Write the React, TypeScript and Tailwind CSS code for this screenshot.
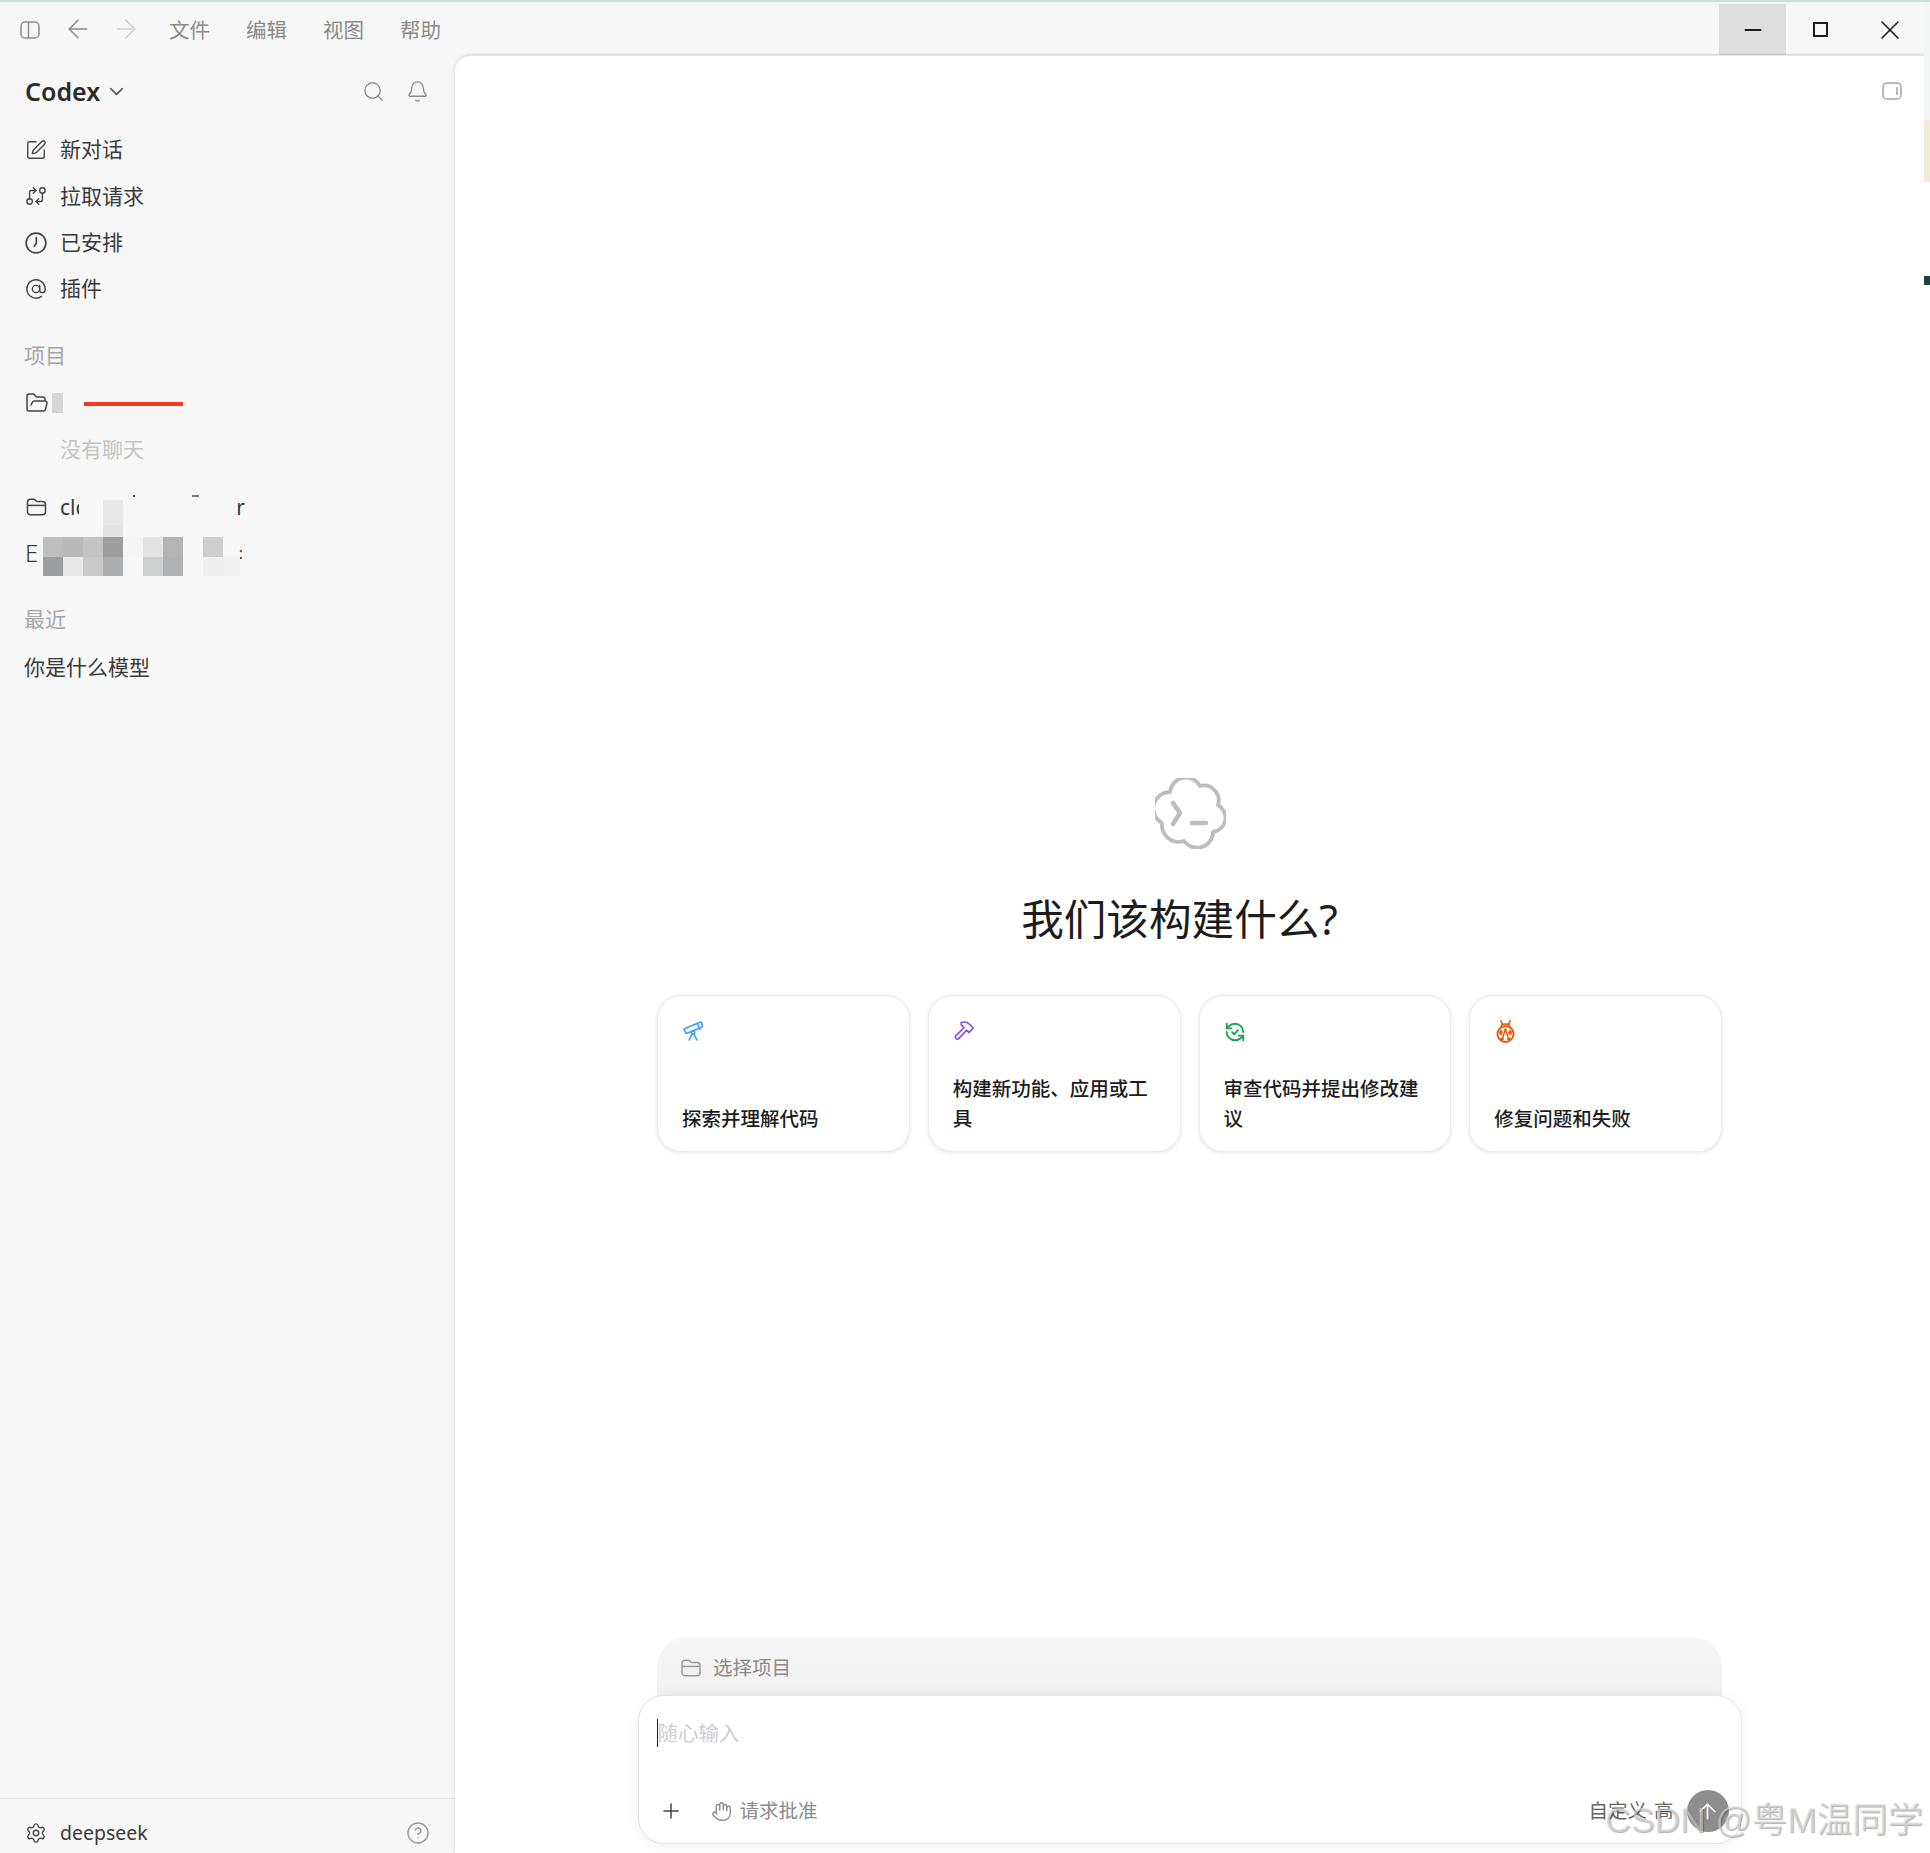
import React from "react";
import { SquarePen, GitCompareArrows, AtSign, FolderOpen, Search, Bell, Settings, CircleHelp, Hand, Plus, ArrowUp, ArrowLeft, ArrowRight, ChevronDown, Minus, X } from "lucide-react";

const FolderIcon = ({ className }: { className?: string }) => (
  <svg viewBox="0 0 20 18" fill="none" stroke="currentColor" strokeWidth="1.5" strokeLinejoin="round" className={className}>
    <path d="M1 4.2C1 2.4 2.2 1.2 4 1.2h3c1 0 1.5.4 2.1 1.1l.6.7c.3.3.6.5 1.1.5H16c1.8 0 3 1.2 3 3v7.2c0 1.8-1.2 3-3 3H4c-1.8 0-3-1.2-3-3z" />
    <path d="M1 7.4h18" />
  </svg>
);

const ClockIcon = ({ className }: { className?: string }) => (
  <svg viewBox="0 0 20 20" fill="none" stroke="currentColor" strokeWidth="1.5" strokeLinecap="round" strokeLinejoin="round" className={className}>
    <circle cx="10" cy="10" r="9" />
    <path d="M10.3 5v5.2L8.4 13" />
  </svg>
);

const TelescopeIcon = ({ className }: { className?: string }) => (
  <svg viewBox="0 0 20 20" fill="none" stroke="currentColor" strokeWidth="1.6" strokeLinecap="round" strokeLinejoin="round" className={className}>
    <path d="M1.5 7.8 14.5 2.2l2.8-1c.7-.2 1.1 0 1.3.5l.9 3.2c.2.6 0 1-.5 1.2l-2.8 1.2L4 12.2c-.6.2-1 0-1.2-.4L1.2 8.8c-.2-.4 0-.8.3-1z" />
    <path d="M14.2 2.4l2.6 5.8" />
    <circle cx="10" cy="11.4" r="1.7" />
    <path d="M9.1 13 6.2 19M11 13l2.9 6" />
  </svg>
);

const HammerIcon = ({ className }: { className?: string }) => (
  <svg viewBox="0 0 20 20" fill="none" stroke="currentColor" strokeWidth="1.6" strokeLinecap="round" strokeLinejoin="round" className={className}>
    <path d="M7.2 1.6c3-1 6.2-.4 8 1.4l4 4-4.2 4.6-2.4-2.4-7.7 8.2c-.8.9-2 1-2.9.1-.9-.8-.9-2 0-2.9l8-7.8-2.8-3.2z" />
  </svg>
);

const ReviewIcon = ({ className }: { className?: string }) => (
  <svg viewBox="0 0 24 24" fill="none" stroke="currentColor" strokeWidth="2" strokeLinecap="round" strokeLinejoin="round" className={className}>
    <path d="M21 12a9 9 0 0 0-9-9 9.75 9.75 0 0 0-6.74 2.74L3 8" />
    <path d="M3 3v5h5" />
    <path d="M3 12a9 9 0 0 0 9 9 9.75 9.75 0 0 0 6.74-2.74L21 16" />
    <path d="M16 16h5v5" />
    <path d="M8.8 12.2l2.3 2.3 4-4.5" />
  </svg>
);

const BugIcon = ({ className }: { className?: string }) => (
  <svg viewBox="0 0 18 22" fill="none" className={className}>
    <path d="M4.5.8 6 3.8M13.5.8 12 3.8" stroke="currentColor" strokeWidth="1.5" strokeLinecap="round" />
    <path d="M5 7V5.8C5 3.2 13 3.2 13 5.8V7" stroke="currentColor" strokeWidth="1.6" />
    <circle cx="9" cy="13.4" r="7.7" stroke="currentColor" strokeWidth="1.8" />
    <path d="M9 8 6.6 16.5M9 8l2.4 8.5" stroke="currentColor" strokeWidth="1.4" />
    <ellipse cx="4.6" cy="12" rx="1.7" ry="2.4" fill="currentColor" />
    <ellipse cx="13.4" cy="12" rx="1.7" ry="2.4" fill="currentColor" />
    <ellipse cx="5.8" cy="18" rx="1.8" ry="1.4" fill="currentColor" />
    <ellipse cx="12.2" cy="18" rx="1.8" ry="1.4" fill="currentColor" />
  </svg>
);

const navItems = [
  { Icon: SquarePen, label: "新对话" },
  { Icon: GitCompareArrows, label: "拉取请求", flip: true },
  { Icon: ClockIcon, label: "已安排" },
  { Icon: AtSign, label: "插件" },
];

const cards = [
  { Icon: TelescopeIcon, cls: "ml-px h-[20px] w-[20px] text-[#3b9cff]", text: "探索并理解代码" },
  { Icon: HammerIcon, cls: "ml-px h-[20px] w-[20px] text-[#8b47f5]", text: "构建新功能、应用或工具" },
  { Icon: ReviewIcon, cls: "h-[22px] w-[22px] text-[#16a34a]", text: "审查代码并提出修改建议" },
  { Icon: BugIcon, cls: "-mt-px ml-[2px] h-[23px] w-[19px] text-[#ea580c]", text: "修复问题和失败" },
];

const mosaic = [
  "", "", "", "bg-[#e8e8e8]", "", "", "", "", "", "",
  "", "", "", "bg-[#e3e3e3]", "", "", "", "", "", "",
  "bg-[#bebebe]", "bg-[#b9b9ba]", "bg-[#c4c4c4]", "bg-[#9e9e9f]", "bg-[#f5f5f5]", "bg-[#e3e3e3]", "bg-[#b4b4b5]", "", "bg-[#cdcecd]", "",
  "bg-[#9d9e9f]", "bg-[#e8e8e8]", "bg-[#c9c9c9]", "bg-[#acadae]", "", "bg-[#cfd0d0]", "bg-[#b0b1b2]", "", "bg-[#efefef]", "bg-[#f0f0f0]",
];

export default function App() {
  return (
    <div className="relative flex h-[1853px] w-[1930px] flex-col overflow-hidden bg-white font-['Noto_Sans','Noto_Sans_CJK_SC',sans-serif] text-[21px] text-[#3a3a3a]">
      <div className="h-[2px] bg-[#cddbdb]" />
      <div className="flex min-h-0 flex-1">
        <div className="flex w-[1924px] flex-col bg-[#f7f7f7]">
          {/* title bar */}
          <div className="flex h-[53px] items-center pl-[20px]">
            <svg viewBox="0 0 20 18" fill="none" stroke="#8f8f8f" strokeWidth="1.5" className="mt-[2px] h-[18px] w-[20px]">
              <rect x="1" y="1" width="18" height="16" rx="4" />
              <path d="M8.5 1v16" />
            </svg>
            <ArrowLeft className="ml-[23px] h-[30px] w-[30px] text-[#8a8a8a]" strokeWidth={1.2} />
            <ArrowRight className="ml-[18px] h-[30px] w-[30px] text-[#cfcfcf]" strokeWidth={1.2} />
            <div className="ml-[28px] mt-[3px] flex gap-[36px] text-[20.5px] leading-none text-[#8a8a8a]">
              <span>文件</span>
              <span>编辑</span>
              <span>视图</span>
              <span>帮助</span>
            </div>
            <div className="ml-auto flex h-full">
              <div className="mt-[2px] flex w-[67px] items-center justify-center bg-[#dedede]">
                <Minus className="h-[26px] w-[26px] text-[#1c1c1c]" strokeWidth={1.7} />
              </div>
              <div className="mt-[2px] flex w-[68px] items-center justify-center">
                <div className="h-[15px] w-[15px] border-2 border-[#1c1c1c]" />
              </div>
              <div className="mt-[2px] flex w-[70px] items-center justify-center pl-px">
                <X className="h-[32px] w-[32px] text-[#1c1c1c]" strokeWidth={1.2} />
              </div>
            </div>
          </div>

          <div className="flex min-h-0 flex-1">
            {/* sidebar */}
            <aside className="flex w-[455px] flex-col">
              <div className="flex h-[72px] items-center pl-[25px] pr-[26px]">
                <span className="text-[25px] font-semibold leading-none text-[#2b2b2b]">Codex</span>
                <ChevronDown className="ml-[5px] h-[23px] w-[23px] text-[#555]" strokeWidth={1.5} />
                <Search className="ml-auto h-[23px] w-[23px] text-[#8a8a8a]" strokeWidth={1.4} />
                <Bell className="ml-[21px] h-[23px] w-[23px] text-[#8a8a8a]" strokeWidth={1.4} />
              </div>
              <nav className="flex flex-col">
                {navItems.map(({ Icon, label, flip }) => (
                  <div key={label} className="flex h-[46.33px] items-center gap-[13px] pl-[25px]">
                    <Icon className={flip ? "h-[22px] w-[22px] -scale-x-100 text-[#444]" : "h-[22px] w-[22px] text-[#444]"} strokeWidth={1.5} />
                    <span>{label}</span>
                  </div>
                ))}
              </nav>
              <div className="relative mt-[20px] flex flex-col">
                <div className="flex h-[46px] items-center pl-[24px] text-[#a6a6a6]">项目</div>
                <div className="mt-[2px] flex h-[46px] items-center pl-[25px]">
                  <FolderOpen className="h-[24px] w-[24px] text-[#444]" strokeWidth={1.5} />
                  <div className="ml-[3px] h-[20px] w-[11px] bg-[#d6d6d6]" />
                  <div className="ml-[21px] mt-[2px] h-[4px] w-[99px] bg-[#ee3c22]" />
                </div>
                <div className="flex h-[46px] items-center pl-[60px] text-[#c4c4c4]">没有聊天</div>
                <div className="relative mt-[12px] flex h-[46px] w-[246px] items-center pl-[26px] pr-[1px]">
                  <FolderIcon className="h-[18px] w-[21px] text-[#444]" />
                  <span className="ml-[13px] block w-[19px] overflow-hidden whitespace-nowrap">clc</span>
                  <span className="ml-auto">r</span>
                  <div className="absolute left-[133px] top-[11px] h-[2px] w-[2px] bg-[#555]" />
                  <div className="absolute left-[192px] top-[11px] h-[2px] w-[7px] bg-[#777]" />
                </div>
                <div className="flex h-[46px] w-[244px] items-center justify-between pl-[25px] pr-[1px]">
                  <span className="text-[24px] font-light leading-none">E</span>
                  <span className="text-[16px]">:</span>
                </div>
                <div className="absolute left-[43px] top-[168px] grid grid-cols-[repeat(9,20px)_17px] grid-rows-[25px_12px_20px_19px]">
                  {mosaic.map((c, i) => (
                    <div key={i} className={c} />
                  ))}
                </div>
                <div className="mt-[20px] flex h-[46px] items-center pl-[24px] text-[#a6a6a6]">最近</div>
                <div className="mt-[2px] flex h-[46px] items-center pl-[24px]">你是什么模型</div>
              </div>
              <div className="mt-auto flex h-[55px] items-center gap-[13px] border-t border-[#e3e3e3] pl-[25px] pr-[25px] pt-[14px]">
                <Settings className="h-[22px] w-[22px] text-[#444]" strokeWidth={1.5} />
                <span className="text-[19.5px]">deepseek</span>
                <CircleHelp className="ml-auto h-[24px] w-[24px] text-[#999]" strokeWidth={1.4} />
              </div>
            </aside>

            {/* main */}
            <main className="flex min-w-0 flex-1 flex-col items-center rounded-tl-[16px] border-t border-[#e6e6e6] bg-white pb-[9px] shadow-[-1px_0_4px_rgba(0,0,0,0.09),1px_0_2px_rgba(0,0,0,0.2)]">
              <div className="flex w-full justify-end pr-[22px] pt-[26px]">
                <svg viewBox="0 0 20 18" fill="none" stroke="#a3a3a3" strokeWidth="1.5" className="h-[18px] w-[20px]">
                  <rect x="1" y="1" width="18" height="16" rx="4" />
                  <path d="M15 5v8" />
                </svg>
              </div>
              <svg viewBox="0 0 71 71" fill="none" stroke="#bdbdbd" strokeWidth="3.8" strokeLinecap="round" strokeLinejoin="round" className="ml-[2px] mt-[678px] h-[71px] w-[71px]">
                <path d="M15 14A16 16 0 0 1 45 8A15 15 0 0 1 63 27A14.5 14.5 0 0 1 58 54A16 16 0 0 1 29 63A17 17 0 0 1 7 45A16.5 16.5 0 0 1 15 14Z" />
                <path d="M18 25l7 10-7 11" strokeWidth="4.6" />
                <path d="M37 45h14" strokeWidth="4.6" />
              </svg>
              <h1 className="mr-[20px] mt-[39px] text-[42.6px] font-normal leading-[60px] text-[#1c1c1c]">我们该构建什么?</h1>
              <div className="mt-[47px] grid w-[1065px] grid-cols-4 gap-[18px]">
                {cards.map(({ Icon, cls, text }) => (
                  <div key={text} className="flex h-[157px] flex-col justify-between rounded-[24px] border border-[#ebebeb] bg-white pb-[17px] pl-[24px] pr-[24px] pt-[25px] shadow-[0_1px_4px_rgba(0,0,0,0.1)]">
                    <Icon className={cls} />
                    <p className="text-[19.5px] font-medium leading-[30px] text-[#1c1c1c]">{text}</p>
                  </div>
                ))}
              </div>

              {/* composer */}
              <div className="mt-auto flex h-[80px] w-[1065px] items-start gap-[12px] rounded-t-[30px] bg-gradient-to-b from-[#f6f6f6] to-[#efefef] pl-[24px] pt-[21px] text-[19.5px] leading-[20px] text-[#8a8a8a]">
                <FolderIcon className="mt-[1px] h-[18px] w-[20px] text-[#999]" />
                <span>选择项目</span>
              </div>
              <div className="relative z-10 -mt-[22px] flex h-[149px] w-[1104px] flex-col rounded-[26px] border border-[#e4e4e4] bg-white pl-[18px] pr-[12px] shadow-[0_2px_14px_rgba(0,0,0,0.06)]">
                <div className="mt-[23px] flex h-[28px] items-center">
                  <div className="h-[28px] w-px bg-[#222]" />
                  <span className="text-[20.5px] leading-none text-[#cecece]">随心输入</span>
                </div>
                <div className="mb-[11px] mt-auto flex h-[42px] items-center">
                  <Plus className="ml-[2px] h-[24px] w-[24px] text-[#444]" strokeWidth={1.5} />
                  <Hand className="ml-[28px] h-[21px] w-[21px] text-[#888]" strokeWidth={1.5} />
                  <span className="ml-[8px] text-[19.5px] leading-none text-[#8a8a8a]">请求批准</span>
                  <span className="ml-auto text-[19.5px] leading-none text-[#666]">自定义</span>
                  <span className="ml-[7px] text-[19.5px] leading-none text-[#666]">高</span>
                  <div className="ml-[13px] flex h-[42px] w-[42px] items-center justify-center rounded-full bg-[#8d8d8d]">
                    <ArrowUp className="h-[25px] w-[25px] text-white" strokeWidth={1.5} />
                  </div>
                </div>
              </div>
            </main>
          </div>
        </div>

        {/* sliver of what lies behind the window */}
        <div className="flex w-[6px] flex-col bg-white">
          <div className="h-[118px] bg-[#f4f5f5]" />
          <div className="h-[62px] bg-[#f3ead9]" />
          <div className="h-[94px] bg-white" />
          <div className="h-[9px] bg-[#1f4040]" />
        </div>
      </div>

      {/* watermark */}
      <div className="absolute left-[1605px] top-[1798px] z-20 whitespace-nowrap font-['Liberation_Sans','Noto_Sans_CJK_SC',sans-serif] text-[35.5px] leading-[44px] text-[rgba(225,225,225,0.6)] [text-shadow:1px_1px_1px_rgba(0,0,0,0.3)]">
        CSDN @粤M温同学
      </div>
    </div>
  );
}
